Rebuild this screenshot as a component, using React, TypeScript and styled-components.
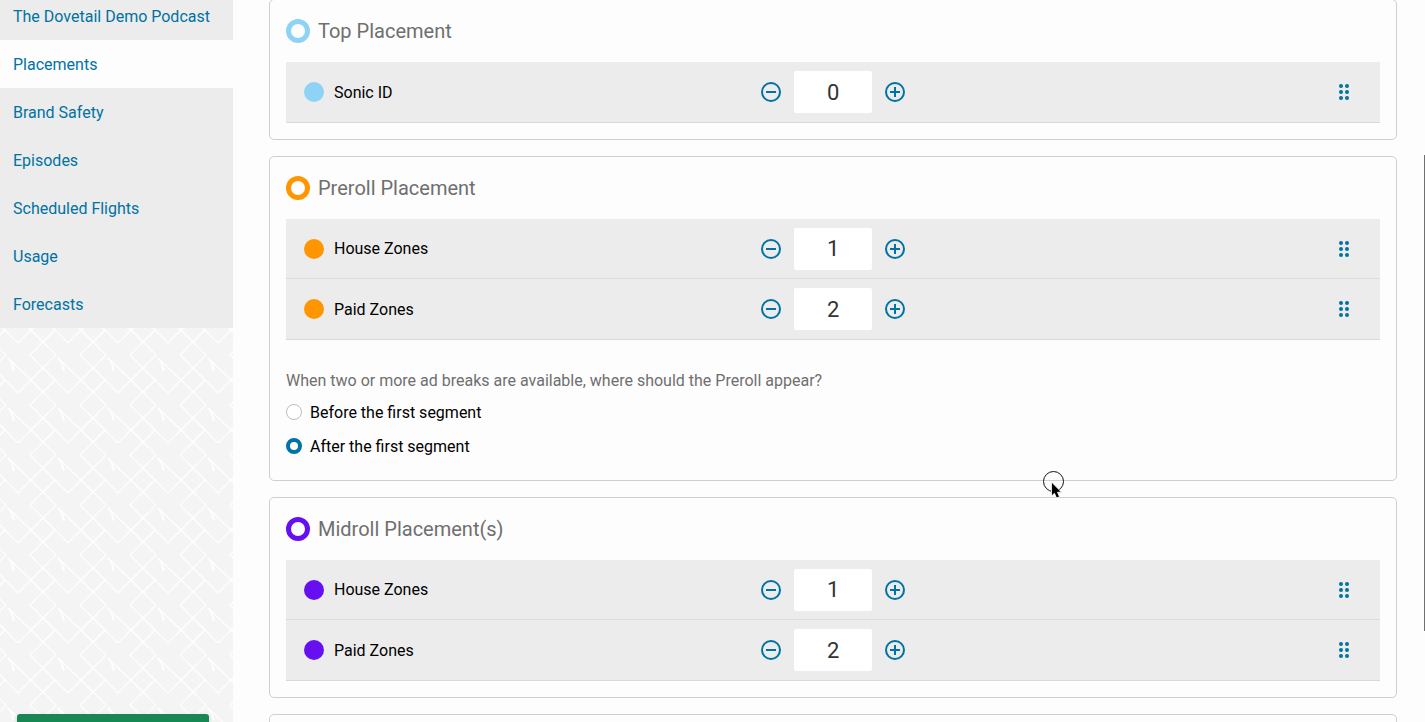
import React, { useState } from "react";
import styled, { createGlobalStyle } from "styled-components";

const BLUE = "#0072a3";

const GlobalStyle = createGlobalStyle`
  *, *::before, *::after { box-sizing: border-box; }
  body {
    margin: 0;
    background: #fdfdfd;
    color: #000;
    font-family: Roboto, "Liberation Sans", sans-serif;
    font-size: 16px;
    line-height: 24px;
    overflow: hidden;
  }
`;

const Page = styled.div`
  display: flex;
  height: 100vh;
  overflow: hidden;
  position: relative;
`;

const Sidebar = styled.aside`
  flex: 0 0 233px;
  display: flex;
  flex-direction: column;
  background: #f4f4f4;
  overflow: hidden;
`;

const Nav = styled.nav`
  display: flex;
  flex-direction: column;
  justify-content: flex-end;
  flex: none;
  height: 328px;
  background: #ececec;
`;

const NavLink = styled.a<{ $active?: boolean }>`
  flex: none;
  padding: 13px 13px 11px;
  color: ${BLUE};
  text-decoration: none;
  background: ${(p) => (p.$active ? "#fdfdfd" : "transparent")};
`;

const Backdrop = styled.div`
  flex: 1;
  min-height: 0;
  display: flex;
  flex-direction: column;
  justify-content: flex-end;
  position: relative;
`;

const PatternSvg = styled.svg`
  position: absolute;
  inset: 0;
  width: 100%;
  height: 100%;
`;

const SaveButton = styled.button`
  position: relative;
  height: 38px;
  margin: 0 24px -30px 17px;
  border: 0;
  border-radius: 3px;
  background: #198754;
  box-shadow: 0 2px 4px rgba(0, 0, 0, 0.15);
`;

const Main = styled.main`
  flex: 1;
  min-width: 0;
  display: flex;
  flex-direction: column;
  gap: 16px;
  margin-top: -1px;
  padding: 0 28px 0 36px;
`;

const Card = styled.section`
  flex: none;
  min-height: 60px;
  padding: 0 16px 16px;
  border: 1px solid #cfcfcf;
  border-radius: 5px;
`;

const CardHeader = styled.header`
  display: flex;
  align-items: center;
  gap: 8px;
  height: 62px;
`;

const Ring = styled.span<{ $color: string }>`
  width: 24px;
  height: 24px;
  border: 5px solid ${(p) => p.$color};
  border-radius: 50%;
`;

const CardTitle = styled.h2`
  margin: 0;
  color: #6f6f6f;
  font-size: 20px;
  font-weight: 400;
  line-height: 24px;
`;

const ZoneList = styled.ul`
  margin: 0;
  padding: 0;
  list-style: none;
  background: #ececec;
  border-bottom: 1px solid #d9d9d9;
`;

const ZoneRow = styled.li`
  display: grid;
  grid-template-columns: 5fr 7fr auto;
  align-items: center;
  height: 60px;
  padding: 0 26px 0 18px;
  &:not(:last-child) {
    border-bottom: 1px solid #dcdcdc;
  }
`;

const ZoneName = styled.div`
  display: flex;
  align-items: center;
  gap: 10px;
  line-height: 26px;
`;

const Dot = styled.span<{ $color: string }>`
  width: 20px;
  height: 20px;
  border-radius: 50%;
  background: ${(p) => p.$color};
`;

const ZoneLabel = styled.span`
  padding-top: 1px;
`;

const Stepper = styled.div`
  display: flex;
  align-items: center;
  gap: 12px;
  padding-left: 27px;
`;

const IconButton = styled.button`
  display: flex;
  padding: 0;
  border: 0;
  background: none;
  color: ${BLUE};
  cursor: pointer;
`;

const CountInput = styled.input`
  width: 78px;
  height: 42px;
  padding: 0;
  border: 0;
  border-radius: 2px;
  background: #fff;
  color: #333;
  font-family: inherit;
  font-size: 22px;
  text-align: center;
`;

const Fieldset = styled.fieldset`
  display: flex;
  flex-direction: column;
  gap: 10px;
  margin: 0;
  padding: 29px 0 5px;
  border: 0;
`;

const Question = styled.legend`
  float: left;
  margin-bottom: -2px;
  padding: 0;
  color: #6f6f6f;
`;

const RadioLabel = styled.label`
  display: flex;
  align-items: center;
  gap: 8px;
`;

const Radio = styled.input`
  appearance: none;
  width: 16px;
  height: 16px;
  margin: 0 0 2px;
  border: 1px solid #bdbdbd;
  border-radius: 50%;
  background: #fff;
  &:checked {
    border: 4px solid ${BLUE};
  }
`;

const Pointer = styled.svg`
  position: absolute;
  left: 1042px;
  top: 470px;
  pointer-events: none;
`;

const ScrollThumb = styled.div`
  position: absolute;
  right: 0;
  top: 155px;
  width: 1px;
  height: 476px;
  background: #707070;
`;

const navItems = [
  "The Dovetail Demo Podcast",
  "Placements",
  "Brand Safety",
  "Episodes",
  "Scheduled Flights",
  "Usage",
  "Forecasts",
];

function Pattern() {
  return (
    <PatternSvg aria-hidden="true">
      <defs>
        <g id="motif" fill="none" stroke="#fff">
          <path d="M38 -1L51 12L38 25L25 12Z M0 37L13 50L26 37 M3 15L26 37" strokeWidth="1.1" />
          <path d="M38 25L50 37L38 49L26 37Z" strokeWidth="1.4" />
          <path d="M2.500 14.500Q8 20 9.500 27L8 28Q7 20 2.500 14.500Z" fill="#fff" strokeWidth="0.5" />
        </g>
        <pattern id="lattice" x="5" y="15" width="50" height="50" patternUnits="userSpaceOnUse">
          <use href="#motif" />
          <use href="#motif" x="-50" />
          <use href="#motif" y="50" />
          <use href="#motif" y="-50" />
        </pattern>
      </defs>
      <rect width="100%" height="100%" fill="url(#lattice)" />
    </PatternSvg>
  );
}

function Zone({ name, color, initial }: { name: string; color: string; initial: number }) {
  const [count, setCount] = useState(initial);
  return (
    <ZoneRow>
      <ZoneName>
        <Dot $color={color} />
        <ZoneLabel>{name}</ZoneLabel>
      </ZoneName>
      <Stepper>
        <IconButton type="button" aria-label={`Fewer ${name}`} onClick={() => setCount(Math.max(0, count - 1))}>
          <svg width="22" height="22" viewBox="0 0 22 22" fill="none" stroke="currentColor" strokeWidth="2">
            <circle cx="11" cy="11" r="9" />
            <path d="M6 11h10" />
          </svg>
        </IconButton>
        <CountInput
          type="text"
          inputMode="numeric"
          aria-label={`${name} count`}
          value={count}
          onChange={(e) => setCount(Number(e.target.value) || 0)}
        />
        <IconButton type="button" aria-label={`More ${name}`} onClick={() => setCount(count + 1)}>
          <svg width="22" height="22" viewBox="0 0 22 22" fill="none" stroke="currentColor" strokeWidth="2">
            <circle cx="11" cy="11" r="9" />
            <path d="M6 11h10M11 6v10" />
          </svg>
        </IconButton>
      </Stepper>
      <IconButton type="button" aria-label={`Reorder ${name}`}>
        <svg width="20" height="20" viewBox="0 0 20 20" fill="currentColor">
          {[4, 10, 16].map((y) => (
            <React.Fragment key={y}>
              <circle cx="7" cy={y} r="2" />
              <circle cx="13" cy={y} r="2" />
            </React.Fragment>
          ))}
        </svg>
      </IconButton>
    </ZoneRow>
  );
}

interface PlacementProps {
  title: string;
  color: string;
  zones: [string, number][];
  children?: React.ReactNode;
}

function Placement({ title, color, zones, children }: PlacementProps) {
  return (
    <Card>
      <CardHeader>
        <Ring $color={color} />
        <CardTitle>{title}</CardTitle>
      </CardHeader>
      <ZoneList>
        {zones.map(([name, count]) => (
          <Zone key={name} name={name} color={color} initial={count} />
        ))}
      </ZoneList>
      {children}
    </Card>
  );
}

export default function App() {
  const [position, setPosition] = useState("after");
  return (
    <>
      <GlobalStyle />
      <Page>
        <Sidebar>
          <Nav>
            {navItems.map((item) => (
              <NavLink key={item} href="#" $active={item === "Placements"}>
                {item}
              </NavLink>
            ))}
          </Nav>
          <Backdrop>
            <Pattern />
            <SaveButton type="button" aria-label="Save" />
          </Backdrop>
        </Sidebar>
        <Main>
          <Placement title="Top Placement" color="#8ed2f6" zones={[["Sonic ID", 0]]} />
          <Placement title="Preroll Placement" color="#ff9600" zones={[["House Zones", 1], ["Paid Zones", 2]]}>
            <Fieldset>
              <Question>When two or more ad breaks are available, where should the Preroll appear?</Question>
              <RadioLabel>
                <Radio type="radio" name="position" checked={position === "before"} onChange={() => setPosition("before")} />
                Before the first segment
              </RadioLabel>
              <RadioLabel>
                <Radio type="radio" name="position" checked={position === "after"} onChange={() => setPosition("after")} />
                After the first segment
              </RadioLabel>
            </Fieldset>
          </Placement>
          <Placement title="Midroll Placement(s)" color="#6610f2" zones={[["House Zones", 1], ["Paid Zones", 2]]} />
          <Card />
        </Main>
        <ScrollThumb />
        <Pointer width="24" height="30" viewBox="0 0 24 30" aria-hidden="true">
          <circle cx="11.500" cy="11.500" r="10" fill="none" stroke="#111" strokeWidth="1" />
          <path d="M9.500 12v14l3-2.700 2 4.700 3-1.200-2-4.600h4z" fill="#000" stroke="#fff" strokeWidth="0.8" />
        </Pointer>
      </Page>
    </>
  );
}
